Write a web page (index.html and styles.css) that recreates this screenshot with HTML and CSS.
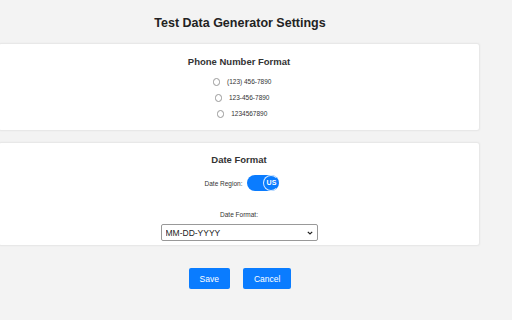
FILE: index.html
```html
<!DOCTYPE html>
<html lang="en">
<head>
  <meta charset="UTF-8" />
  <title>Test Data Generator Settings</title>
  <link rel="stylesheet" href="styles.css">
</head>
<body>
<div class="page">
  <h1>Test Data Generator Settings</h1>

  <div class="card card-phone">
    <h3>Phone Number Format</h3>
    <div class="radio-row"><label><input type="radio" name="phone"> (123) 456-7890</label></div>
    <div class="radio-row"><label><input type="radio" name="phone"> 123-456-7890</label></div>
    <div class="radio-row"><label><input type="radio" name="phone"> 1234567890</label></div>
  </div>

  <div class="card card-date">
    <h3>Date Format</h3>
    <div class="region-row">
      <span class="small-label">Date Region:</span>
      <span class="toggle"><span class="knob">US</span></span>
    </div>
    <div class="small-label format-label">Date Format:</div>
    <select class="format-select">
      <option>MM-DD-YYYY</option>
      <option>DD-MM-YYYY</option>
      <option>YYYY-MM-DD</option>
    </select>
  </div>

  <div class="actions">
    <button class="btn">Save</button>
    <button class="btn">Cancel</button>
  </div>
</div>
</body>
</html>
```

FILE: styles.css
```css
body {
  margin: 0;
  background-color: #f3f3f3;
  font-family: "Liberation Sans", Arial, sans-serif;
  color: #333;
}
.page {
  width: 480px;
  padding-top: 16px;
}
h1 {
  margin: 0 0 12px;
  text-align: center;
  font-size: 12.5px;
  line-height: 15px;
  color: #222;
}
.card {
  width: calc(100% + 2px);
  margin-left: -2px;
  background-color: white;
  border: 1px solid #e8e8e8;
  border-radius: 3px;
  box-shadow: 0 0 2px rgba(0,0,0,0.05);
  text-align: center;
  margin-bottom: 11px;
  box-sizing: border-box;
}
.card h3 {
  margin: 0;
  font-size: 9.5px;
  line-height: 12px;
  color: #333;
}

/* Telefone */
.card-phone {
  height: 88px;
  padding-top: 12px;
}
.card-phone h3 {
  margin-bottom: 6px;
}
.radio-row {
  height: 16px;
  font-size: 6.5px;
  line-height: 16px;
  color: #333;
}
.radio-row label {
  display: inline-flex;
  align-items: center;
}
.radio-row input {
  appearance: none;
  width: 7.5px;
  height: 7.5px;
  margin: 0 7px 0 6px;
  border: 1px solid #999;
  border-radius: 50%;
  background: white;
  box-sizing: border-box;
}

/* Data */
.card-date {
  height: 104px;
  padding-top: 11px;
}
.region-row {
  margin-top: 9px;
  display: flex;
  justify-content: center;
  align-items: center;
  gap: 5px;
  padding-left: 6px;
}
.small-label {
  font-size: 6.5px;
  color: #333;
}
.toggle {
  display: flex;
  justify-content: flex-end;
  align-items: center;
  width: 32px;
  height: 16px;
  border-radius: 8px;
  background-color: #0a7cff;
}
.knob {
  width: 16px;
  height: 16px;
  border-radius: 50%;
  border: 1.5px solid rgba(255,255,255,0.85);
  border-right-color: transparent;
  box-sizing: border-box;
  font-size: 7px;
  font-weight: bold;
  line-height: 13px;
  color: white;
}
.format-label {
  margin-top: 19px;
  line-height: 10px;
}
.format-select {
  appearance: none;
  margin-top: 4px;
  width: 157px;
  height: 17px;
  padding: 0 4px;
  font-family: "Liberation Sans", Arial, sans-serif;
  font-size: 8.5px;
  color: #222;
  border: 1px solid #999;
  border-radius: 2px;
  background: white url("data:image/svg+xml,%3Csvg xmlns='http://www.w3.org/2000/svg' width='6' height='4' viewBox='0 0 6 4'%3E%3Cpath d='M0.8 0.8 L3 3 L5.2 0.8' fill='none' stroke='%23222' stroke-width='1.2'/%3E%3C/svg%3E") no-repeat right 4px center;
}

/* Botões */
.actions {
  display: flex;
  justify-content: center;
  gap: 13px;
  margin-top: 22px;
}
.btn {
  height: 21px;
  padding: 0 11px;
  border: none;
  border-radius: 2px;
  background-color: #0a7cff;
  color: white;
  font-family: "Liberation Sans", Arial, sans-serif;
  font-size: 8.5px;
}
```
